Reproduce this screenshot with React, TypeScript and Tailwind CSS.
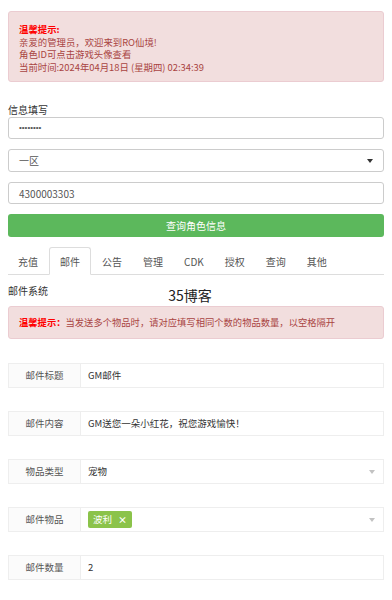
import React from "react";

const TABS = ["充值", "邮件", "公告", "管理", "CDK", "授权", "查询", "其他"];

function Caret({ color }: { color: string }) {
  return (
    <span
      className="block h-0 w-0 border-x-[3.5px] border-t-[4px] border-x-transparent"
      style={{ borderTopColor: color }}
    />
  );
}

function FormRow({ label, children, select }: { label: string; children: React.ReactNode; select?: boolean }) {
  return (
    <div className="flex h-[25px] border border-[#eeeeee] bg-white">
      <div className="flex w-[72px] shrink-0 items-center justify-center border-r border-[#eeeeee] bg-[#fbfbfb] text-[9.5px] text-[#555]">
        {label}
      </div>
      <div className="flex flex-1 items-center pl-[7px] pr-[8px] text-[9.5px] text-[#333]">
        <div className="flex flex-1 items-center">{children}</div>
        {select && <Caret color="#c2c2c2" />}
      </div>
    </div>
  );
}

export default function App() {
  return (
    <div
      className="min-h-[600px] bg-white px-[8px] pt-[11px] text-[10px]"
      style={{ fontFamily: '"Noto Sans CJK SC", "Noto Sans", sans-serif' }}
    >
      {/* top notice */}
      <div className="rounded-[3px] border border-[#ebccd1] bg-[#f2dede] px-[10px] pb-[8px] pt-[11px] text-[9.4px] leading-[12.5px] text-[#a94442]">
        <p className="font-bold text-[#ff0000]">温馨提示:</p>
        <p>亲爱的管理员，欢迎来到RO仙境!</p>
        <p>角色ID可点击游戏头像查看</p>
        <p>当前时间:2024年04月18日 (星期四) 02:34:39</p>
      </div>

      {/* query form */}
      <p className="mt-[22px] text-[10px] leading-[12px] text-[#333]">信息填写</p>
      <div className="mt-[1px] flex flex-col gap-[10px]">
        <div
          className="flex h-[22px] items-center rounded-[3px] border border-[#ccc] px-[10px] text-[8px] text-[#555]"
          style={{ fontFamily: '"Liberation Sans", sans-serif' }}
        >
          ••••••••
        </div>
        <div className="flex h-[23px] items-center justify-between rounded-[3px] border border-[#ccc] px-[10px] text-[10px] text-[#555]">
          <span>一区</span>
          <Caret color="#333" />
        </div>
        <div className="flex h-[22px] items-center rounded-[3px] border border-[#ccc] px-[10px] text-[10px] text-[#555]">
          4300003303
        </div>
        <button className="h-[23px] rounded-[3px] bg-[#5cb85c] text-[10px] text-white">查询角色信息</button>
      </div>

      {/* tabs */}
      <div className="mt-[10px] flex h-[28px] border-b border-[#ddd]">
        {TABS.map((t) => (
          <div
            key={t}
            className={`mr-[1px] mb-[-1px] flex h-[28px] items-center px-[10px] text-[10px] ${
              t === "邮件"
                ? "rounded-t-[3px] border border-[#ddd] border-b-white bg-white px-[9px] text-[#555]"
                : "text-[#555]"
            }`}
          >
            {t}
          </div>
        ))}
      </div>

      <div className="mt-[10px] grid h-[20px] grid-cols-[1fr_auto_1fr] items-start">
        <span className="text-[10px] leading-[12px] text-[#333]">邮件系统</span>
        <span className="mr-[12px] text-[14px] leading-[20px] text-[#222]">35博客</span>
        <span />
      </div>

      {/* mail notice */}
      <div className="mt-[1px] flex h-[33px] items-center rounded-[3px] border border-[#ebccd1] bg-[#f2dede] px-[10px] text-[9.3px] text-[#a94442]">
        <span className="font-bold text-[#ff0000]">温馨提示：</span>
        <span>当发送多个物品时，请对应填写相同个数的物品数量，以空格隔开</span>
      </div>

      {/* mail form */}
      <div className="mt-[24px] flex flex-col gap-[23px]">
        <FormRow label="邮件标题">GM邮件</FormRow>
        <FormRow label="邮件内容">GM送您一朵小红花，祝您游戏愉快！</FormRow>
        <FormRow label="物品类型" select>
          宠物
        </FormRow>
        <FormRow label="邮件物品" select>
          <span className="flex h-[17px] items-center gap-[6px] rounded-[2px] bg-[#8bc34a] px-[5px] text-[9.5px] text-white">
            波利
            <span className="text-[9px] font-bold">×</span>
          </span>
        </FormRow>
        <FormRow label="邮件数量">2</FormRow>
      </div>
    </div>
  );
}
